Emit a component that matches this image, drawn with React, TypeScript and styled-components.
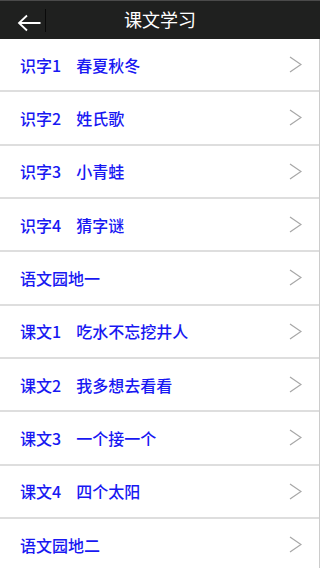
import React from 'react';
import styled, { createGlobalStyle } from 'styled-components';

const GlobalStyle = createGlobalStyle`
  html, body {
    margin: 0;
    padding: 0;
    background: #ffffff;
    font-family: "Noto Sans CJK SC", "Noto Sans", sans-serif;
  }
`;

const Page = styled.div`
  width: 320px;
  height: 568px;
  overflow: hidden;
  background: #ffffff;
`;

const Header = styled.div`
  display: grid;
  grid-template-columns: 50px 1fr 50px;
  align-items: center;
  height: 39px;
  background: #1f201f;
  border-top: 1px solid #4a4a4a;
  box-sizing: border-box;
`;

const BackArea = styled.div`
  display: flex;
  align-items: center;
  height: 100%;
  padding-top: 6px;
  box-sizing: border-box;
`;

const BackIcon = styled.svg`
  margin-left: 17px;
  flex: none;
`;

const Separator = styled.div`
  width: 1px;
  height: 23px;
  margin-left: 4px;
  margin-top: -5px;
  background: #0a0a0a;
`;

const Title = styled.div`
  text-align: center;
  color: #ffffff;
  font-size: 18px;
  line-height: 39px;
  margin-top: -1px;
`;

const List = styled.div`
  border-right: 1px solid #cccccc;
`;

const Row = styled.div`
  display: flex;
  align-items: center;
  height: 53.33px;
  box-sizing: border-box;
  padding: 0 17px 0 20px;
  border-bottom: 2px solid #dedede;
  color: #1818f2;
  font-size: 16px;
  font-weight: 500;
`;

const Label = styled.span`
  flex: none;
`;

const Name = styled.span`
  margin-left: 15px;
  flex: 1;
`;

const Chevron = styled.svg`
  margin-left: auto;
  flex: none;
`;

const items: { label: string; name?: string }[] = [
  { label: '识字1', name: '春夏秋冬' },
  { label: '识字2', name: '姓氏歌' },
  { label: '识字3', name: '小青蛙' },
  { label: '识字4', name: '猜字谜' },
  { label: '语文园地一' },
  { label: '课文1', name: '吃水不忘挖井人' },
  { label: '课文2', name: '我多想去看看' },
  { label: '课文3', name: '一个接一个' },
  { label: '课文4', name: '四个太阳' },
  { label: '语文园地二' },
];

export default function App() {
  return (
    <Page>
      <GlobalStyle />
      <Header>
        <BackArea>
          <BackIcon width="24" height="18" viewBox="0 0 24 18">
            <path d="M23.5 9 H2 M10 1.5 L2 9 L10 16.5" fill="none" stroke="#ffffff" strokeWidth="1.8" />
          </BackIcon>
          <Separator />
        </BackArea>
        <Title>课文学习</Title>
        <div />
      </Header>
      <List>
        {items.map((it) => (
          <Row key={it.label}>
            <Label>{it.label}</Label>
            {it.name && <Name>{it.name}</Name>}
            <Chevron width="13" height="17" viewBox="0 0 13 17">
              <path d="M1 1 L12 8.5 L1 16" fill="none" stroke="#a8a8a8" strokeWidth="1.3" />
            </Chevron>
          </Row>
        ))}
      </List>
    </Page>
  );
}
